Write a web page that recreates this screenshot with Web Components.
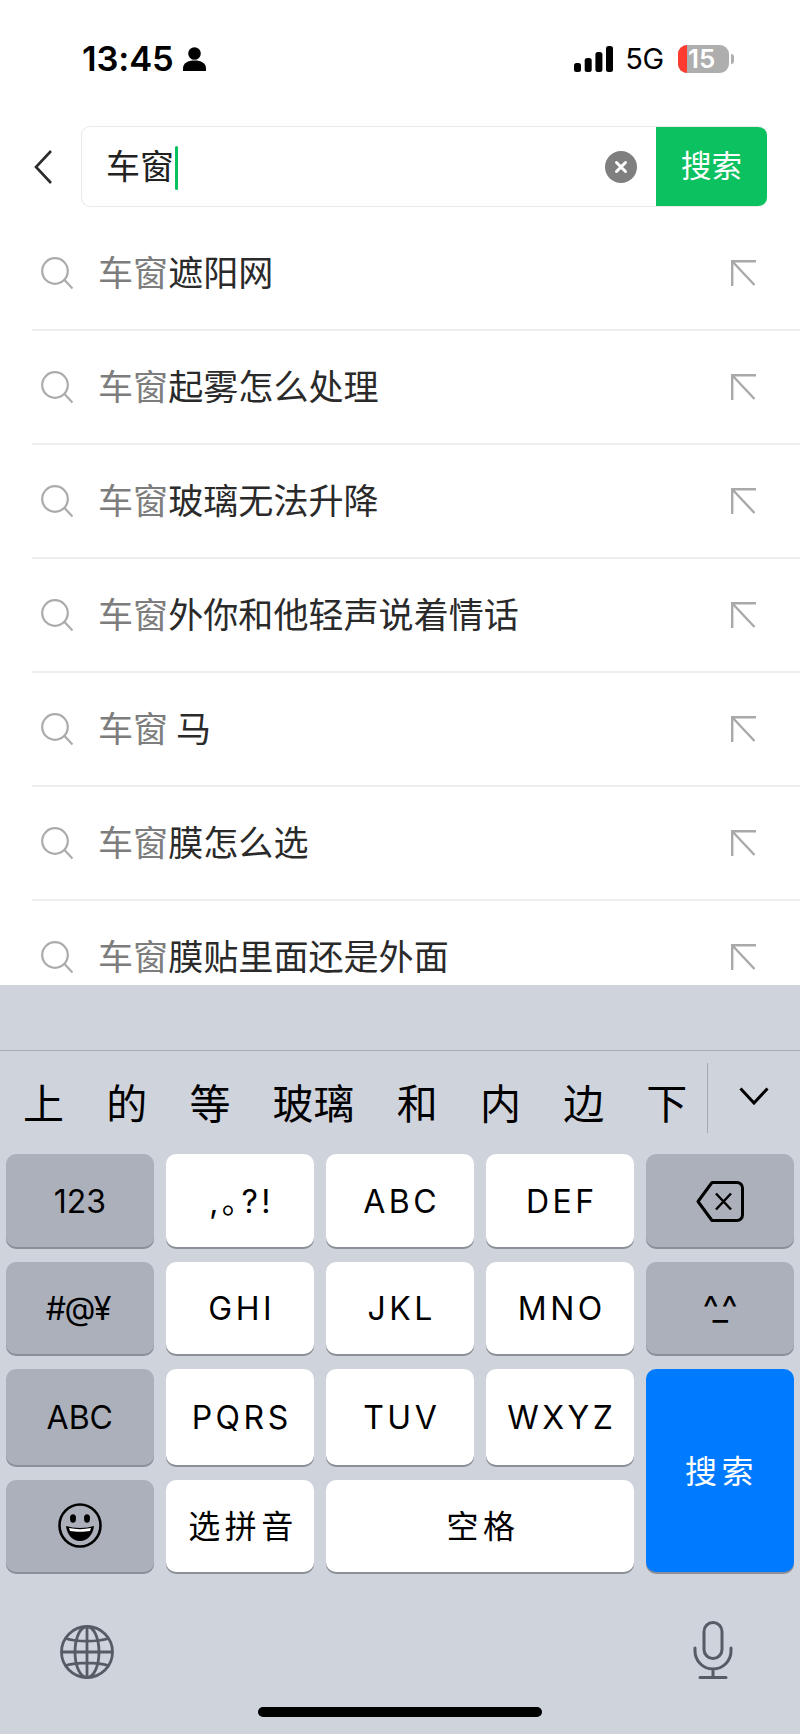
<!DOCTYPE html>
<html lang="zh-CN">
<head>
<meta charset="utf-8">
<title>搜索</title>
<style>
html,body{margin:0;padding:0;background:#fff}
body{width:800px;height:1734px;overflow:hidden;display:flex;flex-direction:column;font-family:Inter,"Noto Sans CJK SC",sans-serif;color:#000}
</style>
</head>
<body>
<x-status></x-status>
<x-search>车窗</x-search>
<x-list>
  <x-suggestion><span slot="match">车窗</span>遮阳网</x-suggestion>
  <x-suggestion><span slot="match">车窗</span>起雾怎么处理</x-suggestion>
  <x-suggestion><span slot="match">车窗</span>玻璃无法升降</x-suggestion>
  <x-suggestion><span slot="match">车窗</span>外你和他轻声说着情话</x-suggestion>
  <x-suggestion><span slot="match">车窗</span> 马</x-suggestion>
  <x-suggestion><span slot="match">车窗</span>膜怎么选</x-suggestion>
  <x-suggestion last><span slot="match">车窗</span>膜贴里面还是外面</x-suggestion>
</x-list>
<x-keyboard></x-keyboard>
<script>
const CJK='"Noto Sans CJK SC"';
function shadow(el,html){el.attachShadow({mode:'open'}).innerHTML=html;}

customElements.define('x-status',class extends HTMLElement{connectedCallback(){shadow(this,`
<style>
:host{display:flex;flex:none;height:126px;box-sizing:border-box;padding:45px 66px 0 82px;align-items:flex-start;justify-content:space-between}
.l,.r{display:flex;align-items:center;height:28px}
.t{font:600 34.5px/28px Inter,sans-serif;letter-spacing:-.1px;margin-right:9px}
.g{font:400 29px/28px Inter,sans-serif;margin:0 14px 0 12px;letter-spacing:-.2px}
.b{position:relative;width:51px;height:28px;border-radius:9px;background:#aeaeae;color:#fff;font:600 26px/28px Inter,sans-serif;box-sizing:border-box;padding-left:10px}
.b i{position:absolute;left:0;top:0;bottom:0;width:9px;background:#ff3b30;border-radius:9px 0 0 9px}
.b span{position:relative}
.tip{width:3px;height:10px;background:#aeaeae;border-radius:0 3px 3px 0;margin-left:2px}
svg{display:block}
</style>
<div class="l"><span class="t">13:45</span>
<svg width="23" height="24" viewBox="0 0 23 24"><circle cx="11.500" cy="6.500" r="6.300" fill="#000"/><path d="M0 24v-2.500C0 16 5 13.500 11.500 13.500S23 16 23 21.500V24z" fill="#000"/></svg></div>
<div class="r">
<svg width="39" height="26" viewBox="0 0 39 26" fill="#000"><rect x="0" y="17" width="7" height="9" rx="2.500"/><rect x="10.700" y="12" width="7" height="14" rx="2.500"/><rect x="21.400" y="6" width="7" height="20" rx="2.500"/><rect x="32" y="0" width="7" height="26" rx="2.500"/></svg>
<span class="g">5G</span>
<div class="b"><i></i><span>15</span></div><div class="tip"></div>
</div>`);}});

customElements.define('x-search',class extends HTMLElement{connectedCallback(){shadow(this,`
<style>
:host{display:flex;flex:none;height:81px;align-items:center;padding:0 33px 0 34px;margin-bottom:9px}
.back{display:block;flex:none;margin-right:29px}
.box{flex:1;height:81px;box-sizing:border-box;display:flex;align-items:center;border:1px solid #e9e9e9;border-right:0;border-radius:9px;overflow:hidden;padding-left:24px}
.v{font:400 34px/44px ${CJK},sans-serif;color:#222;padding-bottom:4px}
.c{width:3px;height:44px;border-radius:2px;background:#07c160;margin:3px 0 0 1px}
.sp{flex:1}
.x{display:block;flex:none;margin-right:19px}
.go{flex:none;width:111px;height:81px;background:#0cc160;color:#fff;display:flex;align-items:center;justify-content:center;font:400 30.500px/1 ${CJK},sans-serif;box-sizing:border-box;padding-bottom:4px}
</style>
<svg class="back" width="18" height="34" viewBox="0 0 18 34" fill="none" stroke="#2b2b2b" stroke-width="2.600"><path d="M17 1 2 17l15 16"/></svg>
<div class="box"><span class="v"><slot></slot></span><span class="c"></span><span class="sp"></span>
<svg class="x" width="32" height="32" viewBox="0 0 32 32"><circle cx="16" cy="16" r="16" fill="#7f7f7f"/><path d="M11.500 11.500l9 9M20.500 11.500l-9 9" stroke="#fff" stroke-width="3" stroke-linecap="round"/></svg>
<div class="go">搜索</div></div>`);}});

customElements.define('x-list',class extends HTMLElement{connectedCallback(){shadow(this,`
<style>:host{display:block;flex:none;height:769px;overflow:hidden;padding-top:1px;box-sizing:border-box}</style><slot></slot>`);}});

customElements.define('x-suggestion',class extends HTMLElement{connectedCallback(){shadow(this,`
<style>
:host{display:flex;height:114px;box-sizing:border-box;margin-left:32px;align-items:center;border-bottom:2px solid #eeeeee;padding-right:44px}
:host([last]){border-bottom-color:transparent}
.s{display:block;flex:none;margin:0 25px 0 9px}
.t{flex:1;font:400 35.100px/48px ${CJK},sans-serif;color:#2a2a2a;white-space:pre;padding-bottom:4px}
::slotted([slot=match]){color:#7d7d7d}
.a{display:block;flex:none}
</style>
<svg class="s" width="32" height="32" viewBox="0 0 32 32" fill="none" stroke="#ababab" stroke-width="2.200"><circle cx="14" cy="14" r="12.800"/><path d="M23.500 23 31.500 31.500"/></svg>
<span class="t"><slot name="match"></slot><slot></slot></span>
<svg class="a" width="25" height="26" viewBox="0 0 25 26" fill="none" stroke="#a9a9a9" stroke-width="2.400"><path d="M25 1.200H1.200V26M1.200 1.200 23.500 25"/></svg>`);}});

customElements.define('x-key',class extends HTMLElement{connectedCallback(){shadow(this,`
<style>
:host{display:flex;align-items:center;justify-content:center;box-sizing:border-box;padding:2px 0 0 3.500px;border-radius:10px;background:#fff;box-shadow:0 2px 0 #8b8f98;color:#000;font:370 32px/1 Inter,${CJK},sans-serif;letter-spacing:3.500px;min-width:0}
:host([fn]){background:#abb0bb;letter-spacing:0;padding-left:0}
:host([blue]){background:#007aff;color:#fff;padding-left:0}
</style><slot></slot>`);}});

customElements.define('x-keyboard',class extends HTMLElement{connectedCallback(){
const cands=['上','的','等','玻璃','和','内','边','下'];
shadow(this,`
<style>
:host{display:block;flex:none;height:749px;background:#cfd3dc;box-sizing:border-box;position:relative;overflow:hidden}
.top{height:65px;border-bottom:1px solid #a9acb4}
.cand{display:flex;align-items:center;height:103px;box-sizing:border-box}
.list{display:flex;gap:42.200px;width:684px;padding-left:23px;box-sizing:border-box;font:400 41px/1 ${CJK},sans-serif;flex:none;white-space:nowrap;padding-bottom:2px}
.div{width:1px;height:70px;background:#a3a7ae;flex:none;align-self:flex-start;margin:12px 0 0 22.500px}
.chev{display:block;margin:36px 0 0 31px;align-self:flex-start}
.keys{display:grid;grid-template-columns:repeat(5,147.600px);column-gap:12.500px;row-gap:15px;grid-template-rows:93px 92px 96px 92px;padding:0 0 0 6px}
.big{grid-column:5;grid-row:3 / span 2}
.space{grid-column:3 / span 2}
.cn{font-family:${CJK},sans-serif;font-weight:400;font-size:32px;letter-spacing:4.500px;padding:0 0 6px 2.500px}
.tight{padding-right:4px;letter-spacing:-1.500px}
.bot{display:flex;justify-content:space-between;align-items:flex-end;padding:0 67px 0 60px;height:107px}
.bot svg{display:block}
.home{position:absolute;left:258px;top:722px;width:284px;height:10px;border-radius:5px;background:#000}
.smile{display:block;margin-bottom:4px}
</style>
<div class="top"></div>
<div class="cand">
 <div class="list">${cands.map(c=>`<span>${c}</span>`).join('')}</div>
 <div class="div"></div>
 <svg class="chev" width="30" height="18" viewBox="0 0 30 18" fill="none" stroke="#000" stroke-width="3"><path d="M1.500 1.500 15 16 28.500 1.500"/></svg>
</div>
<div class="keys">
 <x-key fn>123</x-key><x-key>,｡?!</x-key><x-key>ABC</x-key><x-key>DEF</x-key>
 <x-key fn><svg width="48" height="41" viewBox="0 0 48 41" fill="none" stroke="#000" stroke-width="3" stroke-linejoin="round"><path d="M16 1.500H41a5.500 5.500 0 0 1 5.500 5.500V34a5.500 5.500 0 0 1-5.500 5.500H16L2 20.500z"/><path d="M20 12.500l15 16M35 12.500 20 28.500" stroke-width="2.500"/></svg></x-key>
 <x-key fn><span class="tight">#@¥</span></x-key><x-key>GHI</x-key><x-key>JKL</x-key><x-key>MNO</x-key>
 <x-key fn style="letter-spacing:-4px;font-size:34px;padding:0 4px 0 0">^_^</x-key>
 <x-key fn>ABC</x-key><x-key>PQRS</x-key><x-key>TUV</x-key><x-key>WXYZ</x-key>
 <x-key blue class="big"><span class="cn">搜索</span></x-key>
 <x-key fn><svg class="smile" width="44" height="45" viewBox="0 0 44 45"><ellipse cx="22" cy="22.500" rx="20.500" ry="21" fill="none" stroke="#000" stroke-width="2.600"/><ellipse cx="15" cy="15.500" rx="3" ry="4.200"/><ellipse cx="29" cy="15.500" rx="3" ry="4.200"/><path d="M8 23c8 2.500 20 2.500 28 0-1 9-7 15-14 15S9 32 8 23z"/><path d="M11 25c7 1.500 15 1.500 22 0l-1 3c-6 1-14 1-20 0z" fill="#fff"/></svg></x-key>
 <x-key><span class="cn">选拼音</span></x-key>
 <x-key class="space"><span class="cn">空格</span></x-key>
</div>
<div class="bot">
 <svg width="54" height="54" viewBox="0 0 54 54" fill="none" stroke="#565b65" stroke-width="2.800"><circle cx="27" cy="27" r="25.500"/><ellipse cx="27" cy="27" rx="12" ry="25.500"/><path d="M27 1.500v51M1.500 27h51M5.500 13.500c12 3.500 31 3.500 43 0M5.500 40.500c12-3.500 31-3.500 43 0"/></svg>
 <svg width="40" height="58" viewBox="0 0 40 58" fill="none" stroke="#565b65" stroke-width="3"><rect x="11" y="1.500" width="18" height="36" rx="9"/><path d="M2 27v3a18 18 0 0 0 36 0v-3M20 48v8M7 56.500h26" stroke-linecap="round"/></svg>
</div>
<div class="home"></div>`);}});
</script>
</body>
</html>
